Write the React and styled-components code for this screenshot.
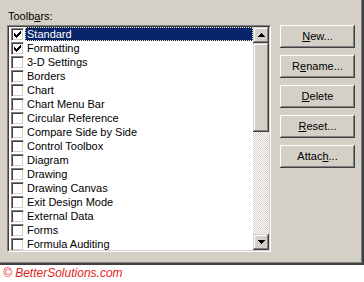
import React from "react";
import styled, { createGlobalStyle } from "styled-components";

const Global = createGlobalStyle`
  html, body { margin: 0; padding: 0; background: #fff; }
  body { font-family: "Liberation Sans", Arial, sans-serif; font-size: 11px; color: #000; }
`;

const Page = styled.div`
  width: 364px;
  height: 282px;
  display: flex;
  flex-direction: column;
`;

const Dialog = styled.div`
  box-sizing: border-box;
  width: 364px;
  height: 266px;
  background: #d4d0c8;
  border-right: 2px solid #404040;
  border-bottom: 2px solid #404040;
  box-shadow: inset -1px -1px #808080;
  display: flex;
  padding: 8px 0 0 7px;
`;

const LeftCol = styled.div`
  display: flex;
  flex-direction: column;
`;

const Label = styled.div`
  margin-left: 1px;
  height: 17px;
  line-height: 17px;
`;

const U = styled.span`
  text-decoration: underline;
  text-underline-offset: 1px;
`;

const ListBox = styled.div`
  box-sizing: border-box;
  width: 264px;
  height: 227px;
  background: #fff;
  border-style: solid;
  border-width: 1px;
  border-color: #808080 #fff #fff #808080;
  box-shadow: inset 1px 1px #404040, inset -1px -1px #d4d0c8;
  padding: 1px;
  display: flex;
`;

const Items = styled.div`
  flex: 1;
  overflow: hidden;
`;

const Row = styled.div`
  height: 14px;
  display: flex;
  align-items: center;
  padding-left: 2px;
`;

const Box = styled.div`
  box-sizing: border-box;
  width: 13px;
  height: 13px;
  background: #fff;
  border-style: solid;
  border-width: 1px;
  border-color: #808080 #fff #fff #808080;
  box-shadow: inset 1px 1px #404040, inset -1px -1px #d4d0c8;
  display: flex;
  align-items: center;
  justify-content: center;
  flex: none;
`;

const ItemText = styled.div`
  box-sizing: border-box;
  height: 14px;
  line-height: 14px;
  margin-left: 1px;
  padding-left: 2px;
  white-space: nowrap;
  flex: ${(p) => (p.$selected ? "1" : "none")};
  background: ${(p) => (p.$selected ? "#0a246a" : "transparent")};
  color: ${(p) => (p.$selected ? "#fff" : "#000")};
  outline: ${(p) => (p.$selected ? "1px dotted #f2e9b8" : "none")};
  outline-offset: -1px;
`;

const ScrollBar = styled.div`
  width: 16px;
  display: flex;
  flex-direction: column;
  flex: none;
`;

const SBtn = styled.div`
  box-sizing: border-box;
  width: 16px;
  height: 16px;
  background: #d4d0c8;
  box-shadow: inset -1px -1px #404040, inset 1px 1px #d4d0c8,
    inset -2px -2px #808080, inset 2px 2px #fff;
  display: flex;
  align-items: center;
  justify-content: center;
  flex: none;
`;

const Thumb = styled(SBtn)`
  height: 89px;
`;

const Track = styled.div`
  flex: 1;
  background-color: #fff;
  background-image: conic-gradient(#d4d0c8 25%, #fff 0 50%, #d4d0c8 0 75%, #fff 0);
  background-size: 2px 2px;
`;

const RightCol = styled.div`
  display: flex;
  flex-direction: column;
  gap: 7px;
  margin-left: 9px;
  margin-top: 17px;
`;

const Button = styled.div`
  box-sizing: border-box;
  width: 75px;
  height: 23px;
  background: #d4d0c8;
  box-shadow: inset -1px -1px #404040, inset 1px 1px #fff,
    inset -2px -2px #808080, inset 2px 2px #d4d0c8;
  display: flex;
  align-items: center;
  justify-content: center;
  padding-bottom: 1px;
`;

const Footer = styled.div`
  height: 16px;
  background: #fff;
  color: #e3211c;
  font-family: "Liberation Sans", Arial, sans-serif;
  font-style: italic;
  font-size: 12px;
  line-height: 14px;
  padding-left: 3px;
  padding-top: 1px;
`;

const Check = () => (
  <svg width="7" height="7" viewBox="0 0 7 7" shapeRendering="crispEdges">
    <path
      fill="#000"
      d="M6 0h1v1h-1zM5 1h2v1h-2zM0 2h1v1h-1zM4 2h3v1h-3zM0 3h2v1h-2zM3 3h3v1h-3zM0 4h5v1h-5zM1 5h3v1h-3zM2 6h1v1h-1z"
    />
  </svg>
);

const Arrow = ({ down }) => (
  <svg width="7" height="4" viewBox="0 0 7 4" shapeRendering="crispEdges">
    <path
      fill="#000"
      d={
        down
          ? "M0 0h7v1h-7zM1 1h5v1h-5zM2 2h3v1h-3zM3 3h1v1h-1z"
          : "M3 0h1v1h-1zM2 1h3v1h-3zM1 2h5v1h-5zM0 3h7v1h-7z"
      }
    />
  </svg>
);

const items = [
  ["Standard", true],
  ["Formatting", true],
  ["3-D Settings"],
  ["Borders"],
  ["Chart"],
  ["Chart Menu Bar"],
  ["Circular Reference"],
  ["Compare Side by Side"],
  ["Control Toolbox"],
  ["Diagram"],
  ["Drawing"],
  ["Drawing Canvas"],
  ["Exit Design Mode"],
  ["External Data"],
  ["Forms"],
  ["Formula Auditing"],
];

export default function App() {
  return (
    <Page>
      <Global />
      <Dialog>
        <LeftCol>
          <Label>
            Toolb<U>a</U>rs:
          </Label>
          <ListBox>
            <Items>
              {items.map(([name, checked], i) => (
                <Row key={name}>
                  <Box>{checked && <Check />}</Box>
                  <ItemText $selected={i === 0}>{name}</ItemText>
                </Row>
              ))}
            </Items>
            <ScrollBar>
              <SBtn>
                <Arrow />
              </SBtn>
              <Thumb />
              <Track />
              <SBtn>
                <Arrow down />
              </SBtn>
            </ScrollBar>
          </ListBox>
        </LeftCol>
        <RightCol>
          <Button>
            <U>N</U>ew...
          </Button>
          <Button>
            R<U>e</U>name...
          </Button>
          <Button>
            <U>D</U>elete
          </Button>
          <Button>
            <U>R</U>eset...
          </Button>
          <Button>
            Attac<U>h</U>...
          </Button>
        </RightCol>
      </Dialog>
      <Footer>© BetterSolutions.com</Footer>
    </Page>
  );
}
